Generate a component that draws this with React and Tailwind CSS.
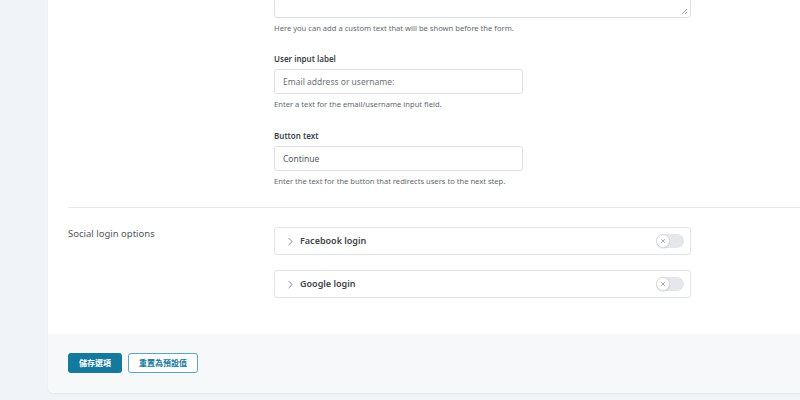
import React from "react";
import { ChevronRight, X } from "lucide-react";

const fieldInput =
  "h-[25px] w-[249px] rounded-[3px] border border-[#dcdfe3] bg-white px-[8px] text-[8.5px] text-[#50575e] placeholder:text-[#6b7178] outline-none";

const Toggle = () => (
  <div className="flex h-[14px] w-[28px] items-center rounded-full bg-[#e4e7eb]">
    <div className="flex h-[14px] w-[14px] items-center justify-center rounded-full border border-[#d7dbe0] bg-white shadow-[0_1px_1px_rgba(0,0,0,0.08)]">
      <X size={6} strokeWidth={3} className="text-[#8b9096]" />
    </div>
  </div>
);

const SocialRow = ({ label }) => (
  <div className="flex h-[28px] w-[417px] items-center rounded-[3px] border border-[#e1e4e8] bg-white pl-[9px] pr-[6px]">
    <ChevronRight size={13} strokeWidth={1.5} className="text-[#6b7178]" />
    <span className="ml-[3px] flex-1 text-[9px] font-semibold text-[#3c434a]">
      {label}
    </span>
    <Toggle />
  </div>
);

const App = () => {
  return (
    <div
      className="flex h-[400px] w-[800px] flex-col justify-end overflow-hidden bg-[#f0f3f7] pb-[7px] pl-[48px]"
      style={{ fontFamily: '"Noto Sans", "Noto Sans CJK TC", sans-serif' }}
    >
      <div className="rounded-bl-[6px] bg-white shadow-[0_1px_2px_rgba(0,0,0,0.06)]">
        <div className="pl-[226px]">
          <div className="relative h-[60px] w-[417px] rounded-[3px] border border-[#dcdfe3] bg-white">
            <svg
              className="absolute bottom-[2px] right-[2px]"
              width="7"
              height="7"
              viewBox="0 0 7 7"
            >
              <path d="M6 1 L1 6 M6 4 L4 6" stroke="#a0a5aa" strokeWidth="1" />
            </svg>
          </div>
          <p className="mt-[3px] text-[7.6px] leading-[14px] text-[#646970]">
            Here you can add a custom text that will be shown before the form.
          </p>

          <p className="mt-[17px] text-[8px] font-semibold leading-[14px] text-[#3c434a]">
            User input label
          </p>
          <input
            className={`mt-[3px] ${fieldInput}`}
            placeholder="Email address or username:"
          />
          <p className="mt-[3px] text-[7.6px] leading-[14px] text-[#646970]">
            Enter a text for the email/username input field.
          </p>

          <p className="mt-[18px] text-[8px] font-semibold leading-[14px] text-[#3c434a]">
            Button text
          </p>
          <input className={`mt-[3px] ${fieldInput}`} defaultValue="Continue" />
          <p className="mt-[3px] text-[7.6px] leading-[14px] text-[#646970]">
            Enter the text for the button that redirects users to the next step.
          </p>
        </div>

        <div className="ml-[20px] mt-[19px] flex border-t border-[#e6e8eb] pb-[36px] pt-[19px]">
          <div className="w-[206px] text-[9.5px] leading-[14px] text-[#50575e]">
            Social login options
          </div>
          <div className="flex flex-col gap-[15px]">
            <SocialRow label="Facebook login" />
            <SocialRow label="Google login" />
          </div>
        </div>

        <div className="flex gap-[6px] rounded-bl-[6px] bg-[#f6f8fa] px-[20px] pb-[20px] pt-[19px]">
          <button className="h-[20px] w-[54px] rounded-[3px] bg-[#14799c] text-[8px] font-bold text-white">
            儲存選項
          </button>
          <button className="h-[20px] w-[70px] rounded-[3px] border border-[#5aa7bf] bg-white text-[8px] font-bold text-[#14799c]">
            重置為預設值
          </button>
        </div>
      </div>
    </div>
  );
};

export default App;
